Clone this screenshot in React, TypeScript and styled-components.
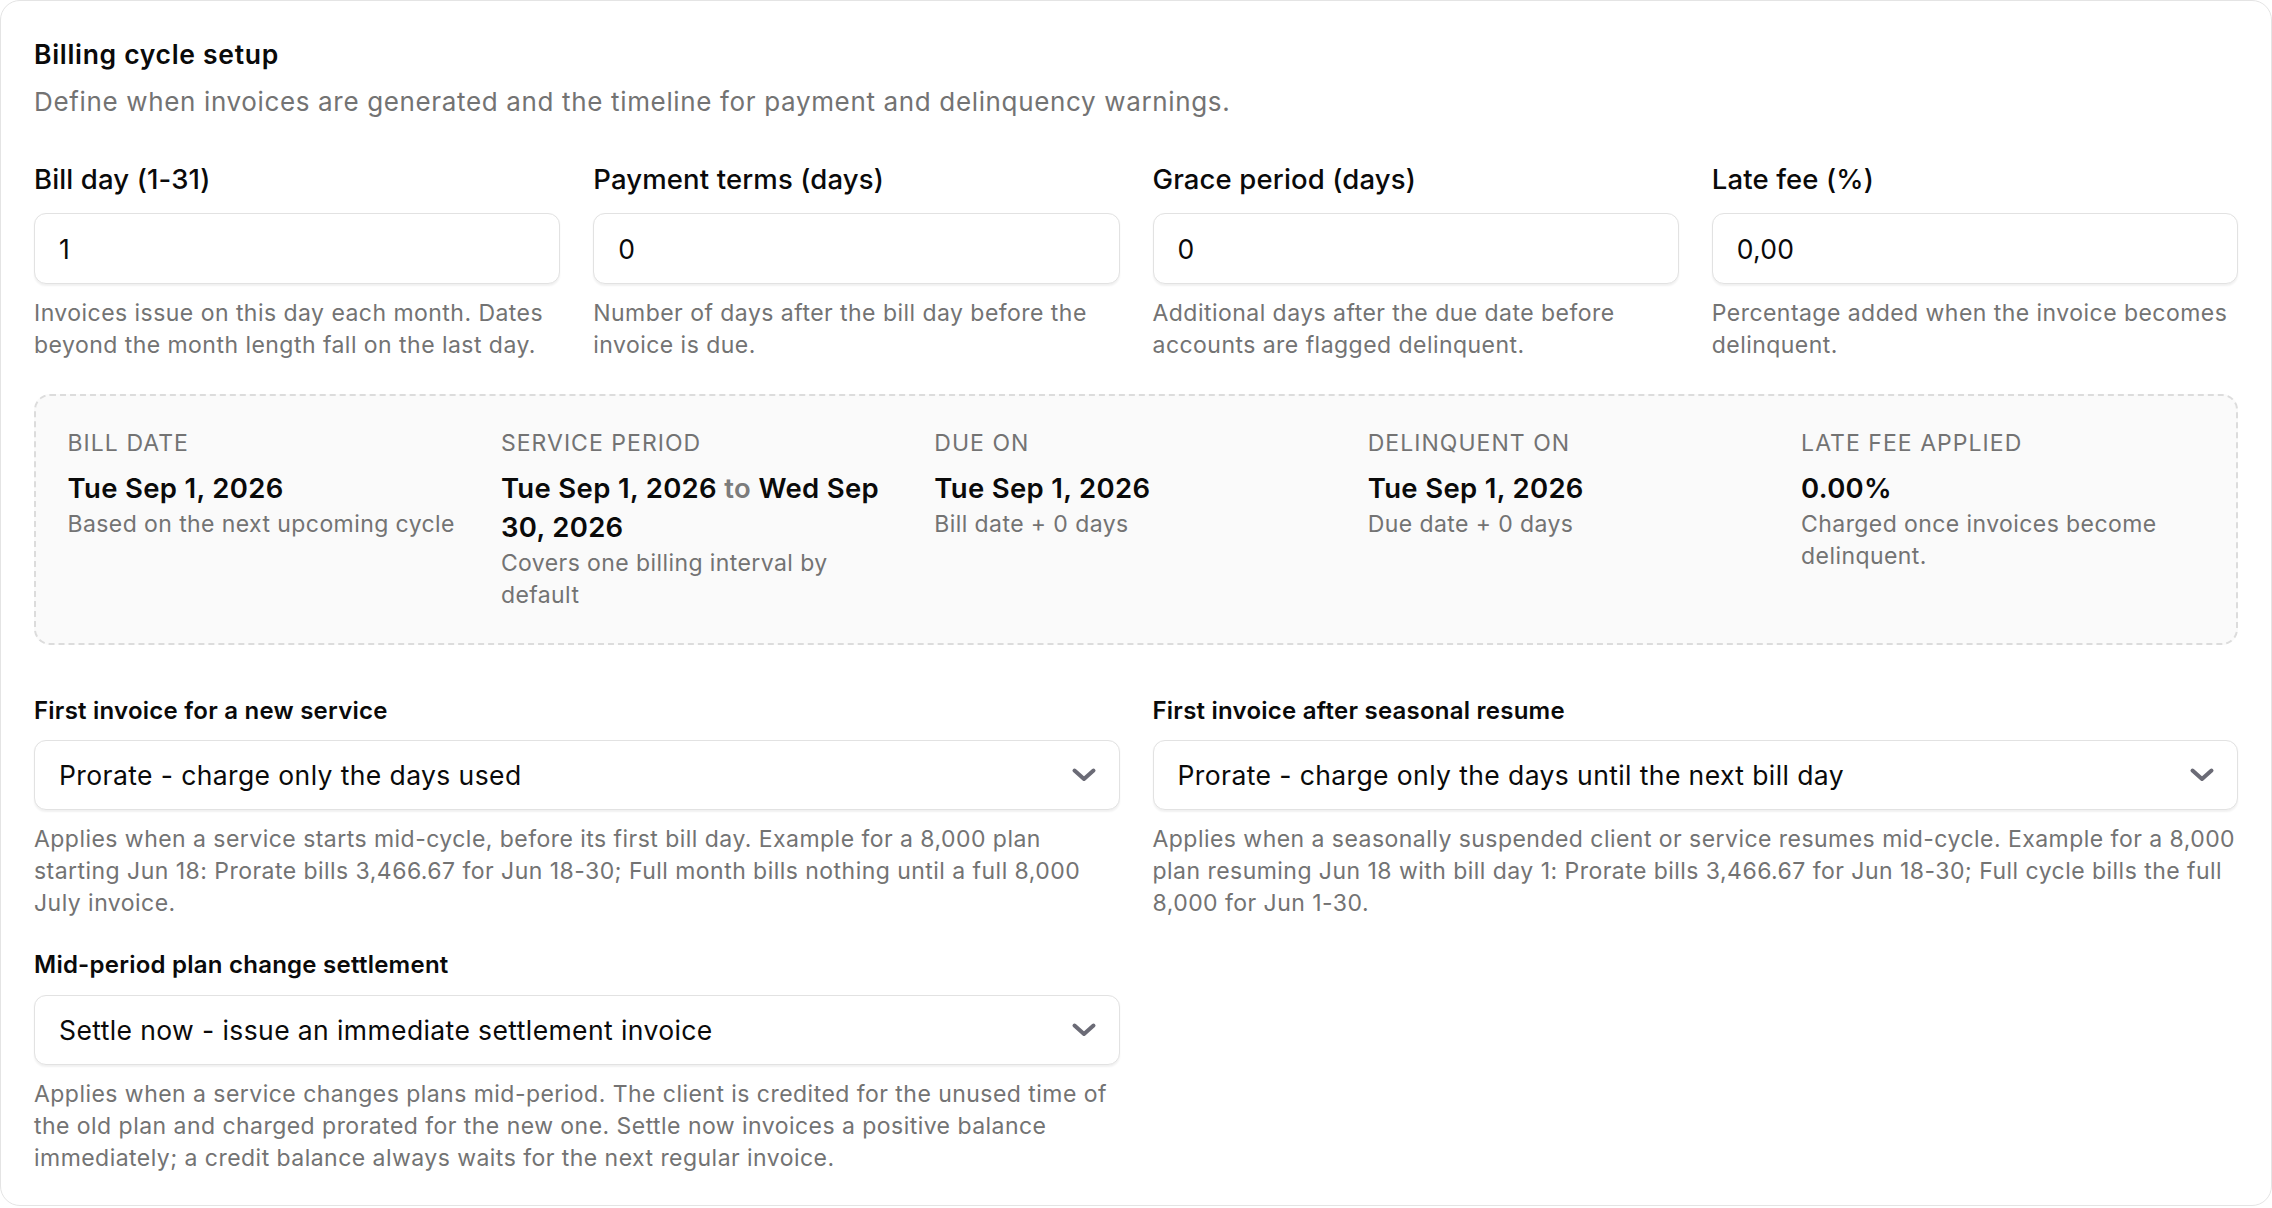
import React from "react";
import styled, { createGlobalStyle } from "styled-components";

const GlobalStyle = createGlobalStyle`
  html, body {
    margin: 0;
    padding: 0;
    background: #ffffff;
  }
  body {
    font-family: Inter, "Noto Sans", "Liberation Sans", sans-serif;
    color: #0a0a0a;
    -webkit-font-smoothing: antialiased;
  }
  * {
    box-sizing: border-box;
  }
`;

const Card = styled.section`
  border: 1.5px solid #e4e4e4;
  border-radius: 20px;
  padding: 35px 33px 31px;
  background: #ffffff;
`;

const Title = styled.h2`
  margin: 0;
  font-size: 26.5px;
  line-height: 37px;
  font-weight: 600;
  letter-spacing: 0.026em;
`;

const Description = styled.p`
  margin: 12px 0 0;
  font-size: 26px;
  line-height: 34px;
  color: #737373;
  letter-spacing: 0.025em;
`;

const FieldGrid = styled.div`
  display: grid;
  grid-template-columns: repeat(4, 1fr);
  column-gap: 33px;
  margin-top: 42px;
`;

const Field = styled.div`
  display: flex;
  flex-direction: column;
`;

const FieldLabel = styled.label<{ $small?: boolean }>`
  font-size: ${(p) => (p.$small ? "24px" : "27.5px")};
  line-height: ${(p) => (p.$small ? "32px" : "36px")};
  font-weight: ${(p) => (p.$small ? 600 : 500)};
  letter-spacing: ${(p) => (p.$small ? "0.01em" : "0.005em")};
  margin-bottom: ${(p) => (p.$small ? "13.5px" : "16px")};
`;

const TextInput = styled.input`
  height: 71px;
  width: 100%;
  border: 1.5px solid #e2e2e2;
  border-radius: 12px;
  padding: 0 24px;
  font-family: inherit;
  font-size: 26.5px;
  letter-spacing: 0.01em;
  color: #0a0a0a;
  background: #ffffff;
  box-shadow: 0 1.5px 2px rgba(0, 0, 0, 0.06);
  outline: none;
`;

const Hint = styled.p`
  margin: 13px 0 0;
  font-size: 23px;
  line-height: 32px;
  color: #737373;
  letter-spacing: 0.02em;
`;

const Summary = styled.div`
  display: grid;
  grid-template-columns: repeat(5, 1fr);
  column-gap: 30px;
  margin-top: 33px;
  padding: 31px 31.5px 32px;
  border: 2px dashed #dcdcdc;
  border-radius: 16px;
  background: #fafafa;
`;

const SummaryItem = styled.div`
  display: flex;
  flex-direction: column;
`;

const SummaryHeading = styled.div`
  font-size: 23px;
  line-height: 32px;
  color: #737373;
  text-transform: uppercase;
  letter-spacing: 0.045em;
  margin-bottom: 9.5px;
`;

const SummaryValue = styled.div`
  font-size: 27.5px;
  line-height: 39px;
  font-weight: 600;
  letter-spacing: 0.012em;
`;

const Muted = styled.span`
  color: #7c7c7c;
`;

const SummaryNote = styled.div`
  font-size: 23px;
  line-height: 32px;
  color: #737373;
  letter-spacing: 0.018em;
`;

const PolicyGrid = styled.div`
  display: grid;
  grid-template-columns: 1fr 1fr;
  column-gap: 33px;
  row-gap: 30px;
  margin-top: 50px;
  align-items: start;
`;

const SelectBox = styled.div`
  display: flex;
  align-items: center;
  justify-content: space-between;
  height: 70px;
  padding: 0 22px 0 24px;
  border: 1.5px solid #e2e2e2;
  border-radius: 12px;
  background: #ffffff;
  box-shadow: 0 1.5px 2px rgba(0, 0, 0, 0.06);
  font-size: 26.5px;
  letter-spacing: 0.015em;
`;

const Chevron = () => (
  <svg width="26" height="16" viewBox="0 0 26 16" fill="none">
    <path
      d="M3.5 3.5 L13 12 L22.5 3.5"
      stroke="#6b6b76"
      strokeWidth="4"
      strokeLinecap="round"
      strokeLinejoin="round"
    />
  </svg>
);

const fields = [
  {
    label: "Bill day (1-31)",
    value: "1",
    hint: "Invoices issue on this day each month. Dates beyond the month length fall on the last day.",
  },
  {
    label: "Payment terms (days)",
    value: "0",
    hint: "Number of days after the bill day before the invoice is due.",
  },
  {
    label: "Grace period (days)",
    value: "0",
    hint: "Additional days after the due date before accounts are flagged delinquent.",
  },
  {
    label: "Late fee (%)",
    value: "0,00",
    hint: "Percentage added when the invoice becomes delinquent.",
  },
];

const policies = [
  {
    label: "First invoice for a new service",
    value: "Prorate - charge only the days used",
    hint: "Applies when a service starts mid-cycle, before its first bill day. Example for a 8,000 plan starting Jun 18: Prorate bills 3,466.67 for Jun 18-30; Full month bills nothing until a full 8,000 July invoice.",
  },
  {
    label: "First invoice after seasonal resume",
    value: "Prorate - charge only the days until the next bill day",
    hint: "Applies when a seasonally suspended client or service resumes mid-cycle. Example for a 8,000 plan resuming Jun 18 with bill day 1: Prorate bills 3,466.67 for Jun 18-30; Full cycle bills the full 8,000 for Jun 1-30.",
  },
  {
    label: "Mid-period plan change settlement",
    value: "Settle now - issue an immediate settlement invoice",
    hint: "Applies when a service changes plans mid-period. The client is credited for the unused time of the old plan and charged prorated for the new one. Settle now invoices a positive balance immediately; a credit balance always waits for the next regular invoice.",
  },
];

const App = () => {
  return (
    <>
      <GlobalStyle />
      <Card>
        <Title>Billing cycle setup</Title>
        <Description>
          Define when invoices are generated and the timeline for payment and delinquency warnings.
        </Description>

        <FieldGrid>
          {fields.map((f) => (
            <Field key={f.label}>
              <FieldLabel>{f.label}</FieldLabel>
              <TextInput value={f.value} readOnly />
              <Hint>{f.hint}</Hint>
            </Field>
          ))}
        </FieldGrid>

        <Summary>
          <SummaryItem>
            <SummaryHeading>Bill date</SummaryHeading>
            <SummaryValue>Tue Sep 1, 2026</SummaryValue>
            <SummaryNote>Based on the next upcoming cycle</SummaryNote>
          </SummaryItem>
          <SummaryItem>
            <SummaryHeading>Service period</SummaryHeading>
            <SummaryValue>
              <span>Tue Sep 1, 2026</span> <Muted>to</Muted> <span>Wed Sep</span>{" "}
              <span>30, 2026</span>
            </SummaryValue>
            <SummaryNote>Covers one billing interval by default</SummaryNote>
          </SummaryItem>
          <SummaryItem>
            <SummaryHeading>Due on</SummaryHeading>
            <SummaryValue>Tue Sep 1, 2026</SummaryValue>
            <SummaryNote>Bill date + 0 days</SummaryNote>
          </SummaryItem>
          <SummaryItem>
            <SummaryHeading>Delinquent on</SummaryHeading>
            <SummaryValue>Tue Sep 1, 2026</SummaryValue>
            <SummaryNote>Due date + 0 days</SummaryNote>
          </SummaryItem>
          <SummaryItem>
            <SummaryHeading>Late fee applied</SummaryHeading>
            <SummaryValue>0.00%</SummaryValue>
            <SummaryNote>Charged once invoices become delinquent.</SummaryNote>
          </SummaryItem>
        </Summary>

        <PolicyGrid>
          {policies.map((p) => (
            <Field key={p.label}>
              <FieldLabel $small>{p.label}</FieldLabel>
              <SelectBox>
                <span>{p.value}</span>
                <Chevron />
              </SelectBox>
              <Hint>{p.hint}</Hint>
            </Field>
          ))}
        </PolicyGrid>
      </Card>
    </>
  );
};

export default App;
